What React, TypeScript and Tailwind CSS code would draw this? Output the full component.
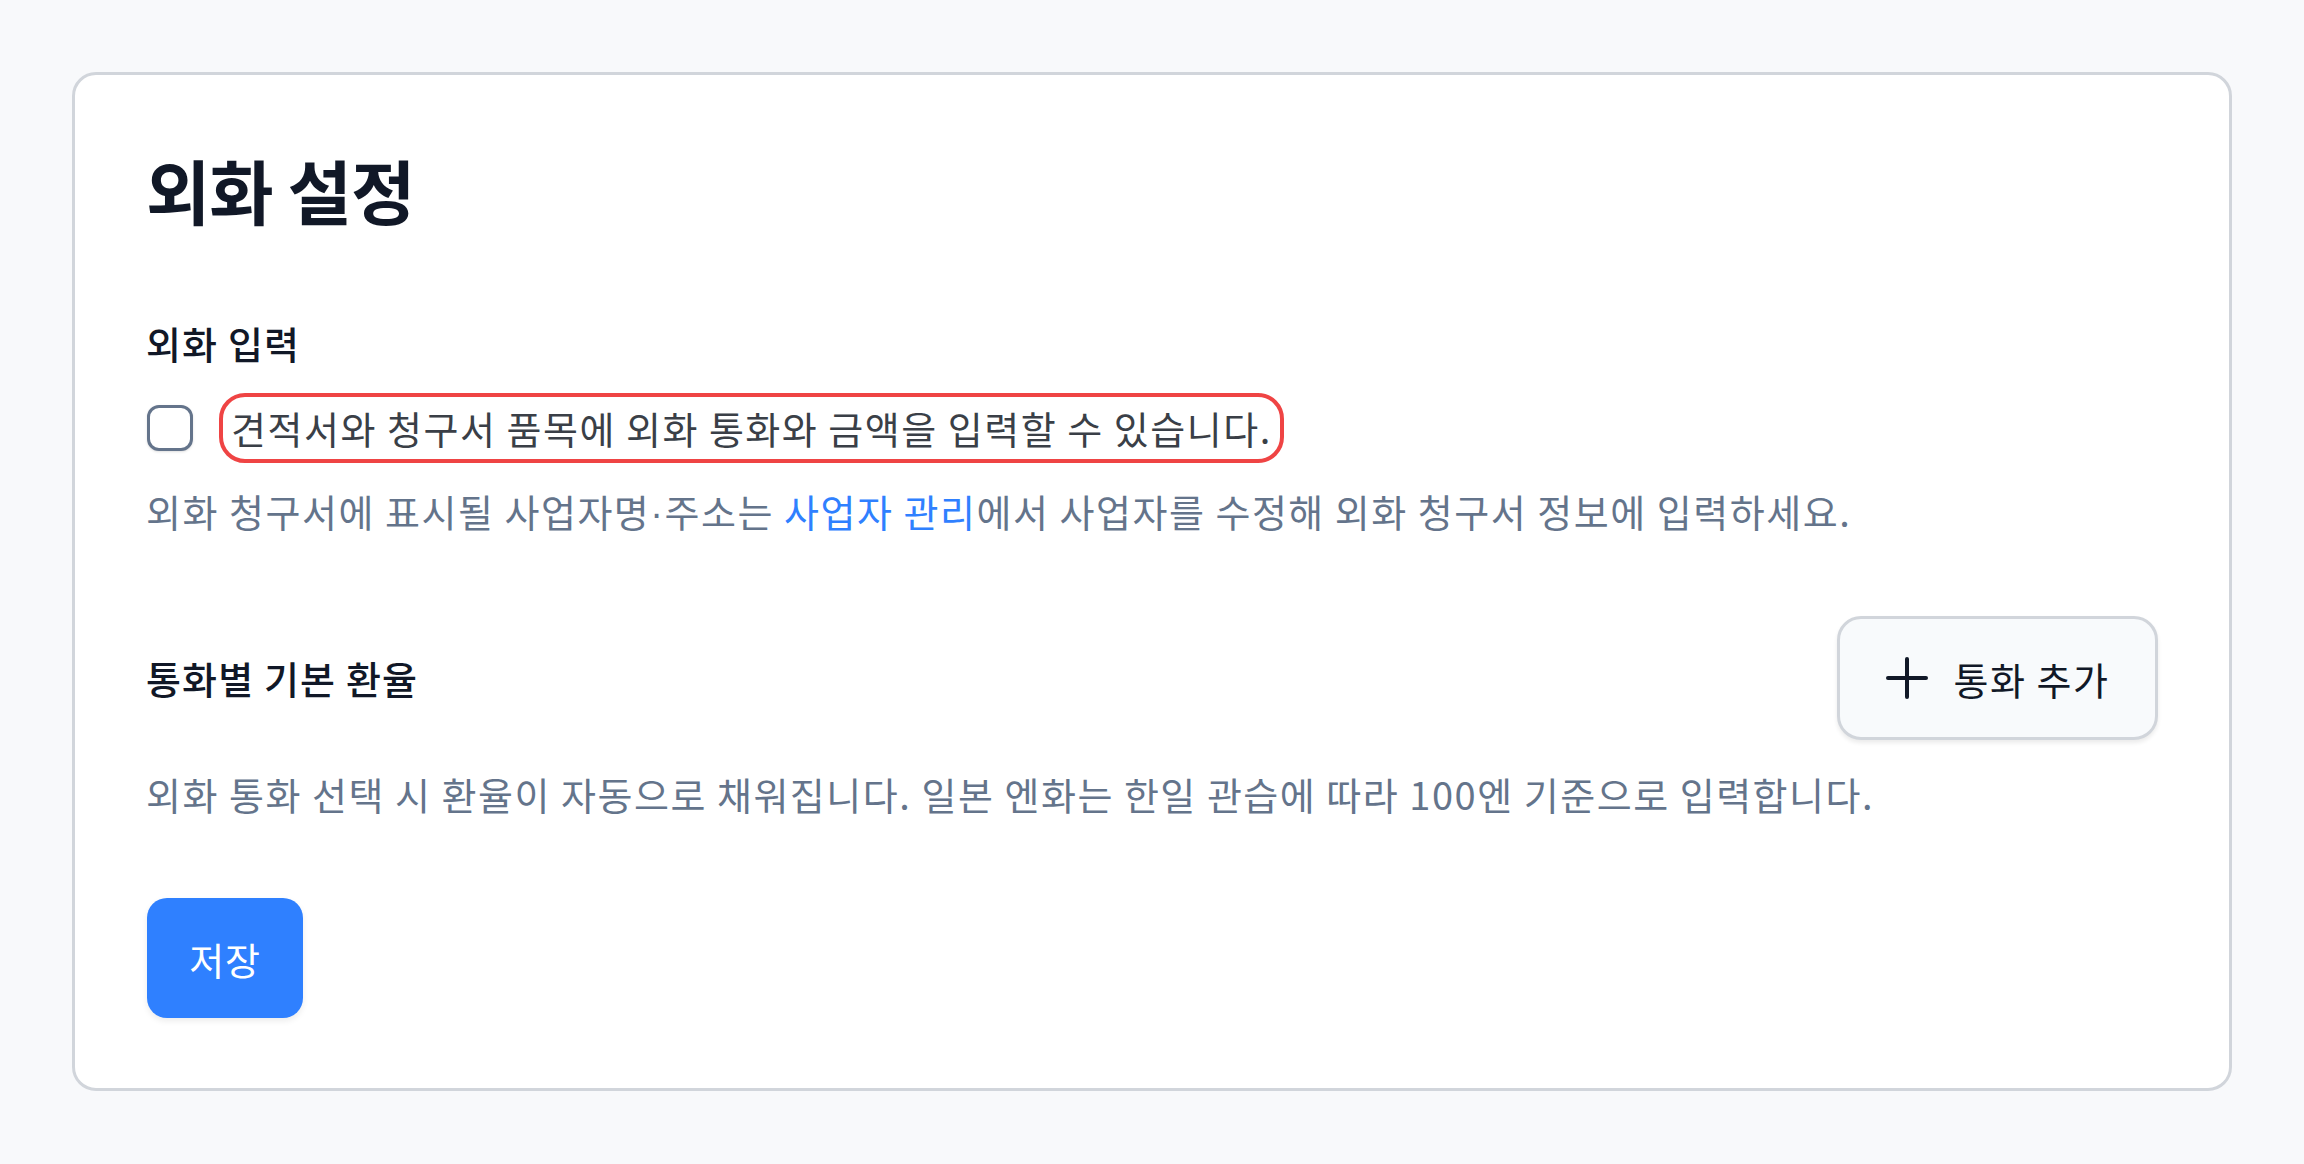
import React from "react";

const FONT = '"Noto Sans CJK KR", "Noto Sans", sans-serif';

function PlusIcon() {
  return (
    <svg width="42" height="42" viewBox="0 0 42 42" fill="none" stroke="#111827" strokeWidth="4" strokeLinecap="round">
      <path d="M2 21h38" />
      <path d="M21 2v38" />
    </svg>
  );
}

function Dot() {
  return <span style={{ fontFamily: '"Liberation Sans", sans-serif' }}>·</span>;
}

export default function App() {
  return (
    <div className="min-h-screen bg-[#f8f9fb] p-[72px]" style={{ fontFamily: FONT }}>
      <div className="rounded-[24px] border-[3px] border-[#d1d5db] bg-white px-[71px] pt-[74px] pb-[70px]">
        <h1 className="text-[70px] font-bold leading-[82px] tracking-[-0.015em] text-[#111827]">외화 설정</h1>

        <div className="mt-[85px]">
          <div className="text-[38px] font-medium leading-[54px] tracking-[0.03em] text-[#111827]">외화 입력</div>
          <div className="mt-[23px] flex items-center gap-[26px]">
            <div className="ml-px h-[46px] w-[46px] shrink-0 rounded-[12px] border-[3px] border-[#64748b] bg-white shadow-sm" />
            <span className="rounded-[26px] border-4 border-[#ef4444] px-[8px] py-[4px] text-[38px] leading-[54px] tracking-[0.04em] text-[#3a3f47]">
              견적서와 청구서 품목에 외화 통화와 금액을 입력할 수 있습니다.
            </span>
          </div>
          <p className="mt-[21px] text-[38px] leading-[54px] tracking-[0.04em] text-[#64748b]">
            외화 청구서에 표시될 사업자명<Dot />주소는 <span className="text-[#2f80ff]">사업자 관리</span>에서 사업자를 수정해 외화 청구서 정보에 입력하세요.
          </p>
        </div>

        <div className="mt-[75px]">
          <div className="flex items-center justify-between">
            <div className="text-[38px] font-medium leading-[54px] tracking-[0.03em] text-[#111827]">통화별 기본 환율</div>
            <button className="flex h-[124px] w-[321px] items-center justify-center gap-[26px] rounded-[24px] border-[3px] border-[#d1d5db] bg-[#f8fafc] text-[38px] tracking-[0.04em] text-[#111827] shadow-[0_3px_4px_rgba(0,0,0,0.08)]">
              <PlusIcon />
              <span>통화 추가</span>
            </button>
          </div>
          <p className="mt-[27px] text-[38px] leading-[54px] tracking-[0.04em] text-[#64748b]">
            외화 통화 선택 시 환율이 자동으로 채워집니다. 일본 엔화는 한일 관습에 따라 100엔 기준으로 입력합니다.
          </p>
        </div>

        <button className="mt-[77px] ml-px flex h-[120px] w-[156px] items-center justify-center rounded-[20px] bg-[#2f80ff] text-[38px] tracking-[0.02em] text-white shadow-[0_3px_6px_rgba(0,0,0,0.08)]">
          저장
        </button>
      </div>
    </div>
  );
}
